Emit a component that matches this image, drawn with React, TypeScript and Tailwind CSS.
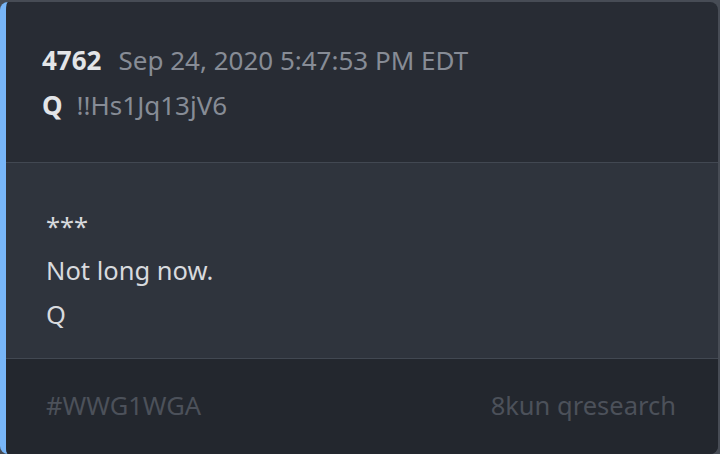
import React from 'react';

const post = {
  num: '4762',
  date: 'Sep 24, 2020 5:47:53 PM EDT',
  author: 'Q',
  trip: '!!Hs1Jq13jV6',
  lines: ['***', 'Not long now.', 'Q'],
  tag: '#WWG1WGA',
  source: '8kun qresearch',
};

const App: React.FC = () => {
  return (
    <div
      className="w-[720px] h-[454px] bg-[#474c55] pt-[2px] pr-[2px]"
      style={{ fontFamily: '"Noto Sans", "Open Sans", sans-serif' }}
    >
      <div className="h-full flex flex-col rounded-lg overflow-hidden border-l-[6px] border-[#78b6f8] bg-[#282c34]">
        <header className="h-[160px] shrink-0 pl-[36px] pt-[36px] text-[26px] leading-[45px]">
          <div className="flex items-baseline gap-[17px]">
            <span className="font-bold text-[#e3e5e8]">{post.num}</span>
            <span className="text-[#878c96]">{post.date}</span>
          </div>
          <div className="flex items-baseline gap-[14px]">
            <span className="font-bold text-[#e3e5e8]">{post.author}</span>
            <span className="text-[#878c96]">{post.trip}</span>
          </div>
        </header>
        <main className="h-[197px] shrink-0 border-y border-[#424852] bg-[#2f343d] pl-[40px] pt-[41px] text-[25.5px] leading-[44px] text-[#d8dade]">
          {post.lines.map((line, i) => (
            <div key={i}>{line}</div>
          ))}
        </main>
        <footer className="flex-1 flex items-center justify-between bg-[#23272e] pl-[40px] pr-[42px] pb-[2px] text-[25.5px] text-[#4c515a]">
          <span>{post.tag}</span>
          <span>{post.source}</span>
        </footer>
      </div>
    </div>
  );
};

export default App;
